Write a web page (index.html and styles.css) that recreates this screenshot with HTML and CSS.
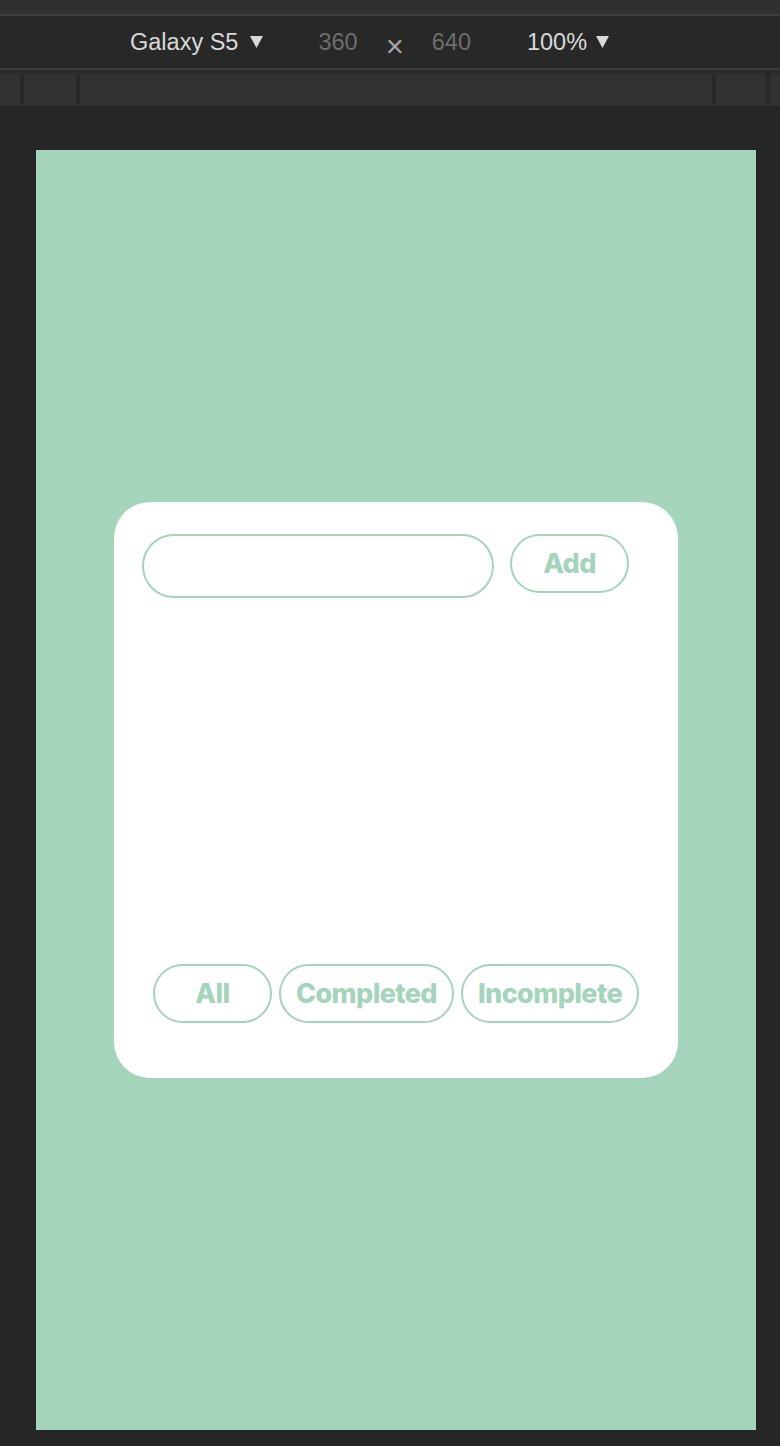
FILE: index.html
```html
<!DOCTYPE html>
<html lang="en">
<head>
    <meta charset="UTF-8">
    <meta name="viewport" content="width=device-width, initial-scale=1.0">
    <title>Todo</title>
    <link rel="stylesheet" href="styles.css">
</head>
<body>
    <div class="top-strip"></div>

    <div class="toolbar">
        <span class="device-name">Galaxy S5
            <svg class="caret" viewBox="0 0 13 12"><path d="M0 0H13L6.5 12Z"/></svg>
        </span>
        <span class="dim">360</span>
        <span class="times">&times;</span>
        <span class="dim">640</span>
        <span class="zoom">100%
            <svg class="caret" viewBox="0 0 13 12"><path d="M0 0H13L6.5 12Z"/></svg>
        </span>
    </div>

    <div class="ruler">
        <div class="cell"></div>
        <div class="cell"></div>
        <div class="cell"></div>
        <div class="cell"></div>
        <div class="cell"></div>
    </div>

    <div class="stage">
        <div class="screen">
            <div class="todo-card">
                <form class="todo-form" onsubmit="return false">
                    <input class="todo-input" type="text">
                    <button class="pill add-btn" type="submit">Add</button>
                </form>
                <ul class="todo-list"></ul>
                <div class="filters">
                    <button class="pill">All</button>
                    <button class="pill">Completed</button>
                    <button class="pill">Incomplete</button>
                </div>
            </div>
        </div>
    </div>
</body>
</html>
```

FILE: styles.css
```css
body {
    margin: 0;
    background-color: #262626;
    font-family: 'Liberation Sans', Arial, sans-serif;
}

.top-strip {
    height: 14px;
    background-color: #303030;
    border-bottom: 2px solid #3c3c3c;
}

.toolbar {
    height: 52px;
    background-color: #282828;
    border-bottom: 2px solid #3c3c3c;
    display: flex;
    align-items: center;
    padding-left: 130px;
    font-size: 23.5px;
    color: #d9d9d9;
}

.device-name {
    display: flex;
    align-items: center;
    gap: 12px;
    margin-right: 55px;
}

.caret {
    width: 13px;
    height: 12px;
    fill: #d9d9d9;
}

.dim {
    color: #6e6e6e;
}

.times {
    color: #a8a8a8;
    font-size: 31px;
    line-height: 1;
    margin: 8px 28px 0;
}

.zoom {
    display: flex;
    align-items: center;
    gap: 9px;
    margin-left: 56px;
}

.ruler {
    display: grid;
    grid-template-columns: 20px 52px 1fr 50px 10px;
    gap: 4px;
    background-color: #272727;
    border-top: 4px solid #2a2a2a;
    border-bottom: 2px solid #313131;
}

.ruler .cell {
    height: 30px;
    background-color: #313131;
}

.stage {
    padding: 44px 24px 16px 36px;
}

.screen {
    width: 720px;
    height: 1280px;
    background-color: #a5d4bc;
    display: flex;
    justify-content: center;
    align-items: center;
}

.todo-card {
    box-sizing: border-box;
    width: 564px;
    height: 576px;
    background-color: #fff;
    border-radius: 36px;
    padding: 32px 28px 55px;
    display: flex;
    flex-direction: column;
}

.todo-form {
    display: flex;
    align-items: flex-start;
    gap: 16px;
    margin: 0;
}

.todo-input {
    box-sizing: border-box;
    width: 352px;
    height: 64px;
    border: 2px solid #a5d4bc;
    border-radius: 32px;
    outline: none;
    padding: 0 24px;
    font-size: 24px;
}

.todo-list {
    flex: 1;
    margin: 0;
    padding: 0;
    list-style: none;
}

.pill {
    box-sizing: border-box;
    min-width: 119px;
    height: 59px;
    padding: 0 15px;
    background-color: #fff;
    border: 2px solid #a5d4bc;
    border-radius: 30px;
    color: #a5d4bc;
    font-family: 'Inter', sans-serif;
    font-weight: 800;
    font-size: 27px;
    letter-spacing: -0.6px;
}

.filters {
    display: flex;
    justify-content: center;
    gap: 7px;
}
```
